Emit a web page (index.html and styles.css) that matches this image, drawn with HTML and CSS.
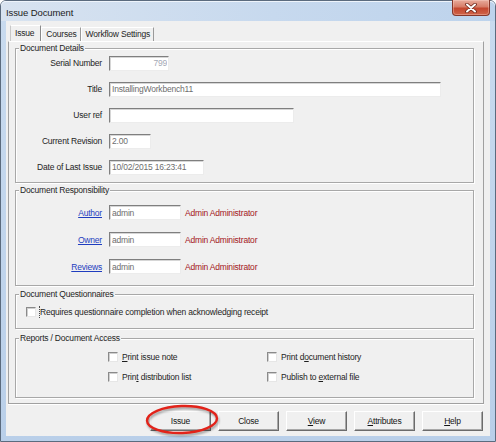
FILE: index.html
```html
<!DOCTYPE html>
<html lang="en">
<head>
<meta charset="utf-8">
<title>Issue Document</title>
<link rel="stylesheet" href="styles.css">
</head>
<body>
<div class="window">
  <div class="titlebar">
    <span class="title">Issue Document</span>
    <button class="close-btn" aria-label="Close">
      <svg width="12" height="10" viewBox="0 0 12 10">
        <path d="M2 1.5 L10 8.5 M10 1.5 L2 8.5" stroke="#6a2418" stroke-width="3.6" stroke-linecap="round"/>
        <path d="M2 1.5 L10 8.5 M10 1.5 L2 8.5" stroke="#ffffff" stroke-width="2" stroke-linecap="round"/>
      </svg>
    </button>
  </div>

  <div class="client">
    <div class="tabs">
      <div class="tab active">Issue</div>
      <div class="tab">Courses</div>
      <div class="tab">Workflow Settings</div>
    </div>

    <div class="panel">
      <div class="group details">
        <span class="group-title">Document Details</span>
        <div class="form-grid">
          <label>Serial Number</label>
          <input class="field w-serial num" type="text" value="799" readonly>
          <label>Title</label>
          <input class="field w-title" type="text" value="InstallingWorkbench11" readonly>
          <label>User ref</label>
          <input class="field w-ref" type="text" value="">
          <label>Current Revision</label>
          <input class="field w-rev" type="text" value="2.00" readonly>
          <label>Date of Last Issue</label>
          <input class="field w-date" type="text" value="10/02/2015 16:23:41" readonly>
        </div>
      </div>

      <div class="group responsibility">
        <span class="group-title">Document Responsibility</span>
        <div class="form-grid people">
          <a class="link" href="#">Author</a>
          <div class="person">
            <input class="field w-user" type="text" value="admin" readonly>
            <span class="fullname">Admin Administrator</span>
          </div>
          <a class="link" href="#">Owner</a>
          <div class="person">
            <input class="field w-user" type="text" value="admin" readonly>
            <span class="fullname">Admin Administrator</span>
          </div>
          <a class="link" href="#">Reviews</a>
          <div class="person">
            <input class="field w-user" type="text" value="admin" readonly>
            <span class="fullname">Admin Administrator</span>
          </div>
        </div>
      </div>

      <div class="group questionnaires">
        <span class="group-title">Document Questionnaires</span>
        <div class="option">
          <span class="check"></span>
          <span class="focus">Requires questionnaire completion when acknowledging receipt</span>
        </div>
      </div>

      <div class="group access">
        <span class="group-title">Reports / Document Access</span>
        <div class="options-grid">
          <div class="option"><span class="check"></span><span><u>P</u>rint issue note</span></div>
          <div class="option"><span class="check"></span><span>Print d<u>o</u>cument history</span></div>
          <div class="option"><span class="check"></span><span>Prin<u>t</u> distribution list</span></div>
          <div class="option"><span class="check"></span><span>Publish to <u>e</u>xternal file</span></div>
        </div>
      </div>
    </div>

    <div class="buttons">
      <button class="btn">Issue</button>
      <button class="btn">Close</button>
      <button class="btn"><u>V</u>iew</button>
      <button class="btn"><u>A</u>ttributes</button>
      <button class="btn"><u>H</u>elp</button>
      <svg class="callout" width="76" height="34" viewBox="0 0 76 34">
        <ellipse cx="38" cy="17.5" rx="35" ry="13.5" transform="rotate(-2 38 17.5)" fill="none" stroke="#e2231a" stroke-width="2.4"/>
      </svg>
    </div>
  </div>
</div>
</body>
</html>
```

FILE: styles.css
```css
* {
  box-sizing: border-box;
}

html,
body {
  margin: 0;
  padding: 0;
}

body {
  width: 496px;
  height: 442px;
  background: #ffffff;
  font-family: "Liberation Sans", Arial, sans-serif;
  font-size: 8.5px;
  letter-spacing: -0.2px;
  line-height: 10px;
  color: #1e1e1e;
}

/* Window frame (Windows 7 basic look) */
.window {
  width: 496px;
  height: 442px;
  display: flex;
  flex-direction: column;
  padding: 0 5px 5px;
  border: 1px solid #5b6b7e;
  border-radius: 6px 6px 0 0;
  background: linear-gradient(to bottom, #c9dbef, #b9cfe9);
}

.titlebar {
  height: 20px;
  flex: none;
  display: flex;
  align-items: flex-start;
  background: linear-gradient(to right, #d8e3f0 0%, #c7d9ee 55%, #bdd3ec 100%);
  margin: 0 -5px;
  padding: 0 5px;
  border-radius: 5px 5px 0 0;
  box-shadow: inset 0 1px 0 #eef4fb;
}

.title {
  font-size: 9.5px;
  letter-spacing: -0.1px;
  line-height: 10px;
  margin-top: 7px;
  color: #1c1c1c;
}

.close-btn {
  margin-left: auto;
  width: 38px;
  height: 16px;
  margin-top: -1px;
  padding: 0;
  display: flex;
  align-items: center;
  justify-content: center;
  border: 1px solid #86372a;
  border-top: none;
  border-radius: 0 0 4px 4px;
  background: linear-gradient(to bottom, #e8ab9c 0%, #d77d68 45%, #c4472f 55%, #cf6449 100%);
  box-shadow: inset 0 0 0 1px rgba(255, 220, 210, 0.35);
}

.close-btn svg {
  display: block;
}

/* Client area */
.client {
  flex: 1;
  display: flex;
  flex-direction: column;
  background: #f0f0f0;
}

.tabs {
  height: 20px;
  flex: none;
  display: flex;
  align-items: flex-end;
  padding-left: 4px;
}

.tab {
  height: 14px;
  padding: 0 3px 0 4px;
  line-height: 12px;
  border-top: 1px solid #ffffff;
  border-left: 1px solid #ffffff;
  border-right: 1px solid #9a9a9a;
  white-space: nowrap;
}

.tab.active {
  height: 16px;
  padding-right: 6px;
  line-height: 14px;
  border-left-color: #c8c8c8;
  border-right-color: #8a8a8a;
}

.panel {
  flex: none;
  display: flex;
  flex-direction: column;
  margin: 0 6px 0 2px;
  padding: 6px 9px 5px 6px;
  border: 1px solid #a0a0a0;
  border-top-color: #ffffff;
  box-shadow: 0 1px 0 #ffffff;
}

/* Group boxes */
.group {
  position: relative;
  border: 1px solid #a8a8a8;
  box-shadow: inset 1px 1px 0 #ffffff, 1px 1px 0 #ffffff;
}

.group-title {
  position: absolute;
  top: -6px;
  left: 3px;
  padding: 0 1px;
  background: #f0f0f0;
  line-height: 10px;
  white-space: nowrap;
}

.details {
  padding: 1px 0 2px;
}

.responsibility {
  margin-top: 7px;
  padding: 8px 0 5px;
}

.questionnaires {
  margin-top: 8px;
  padding: 10px 0 9px 10px;
}

.access {
  margin-top: 9px;
  padding: 11px 0 13px 92px;
}

.form-grid {
  display: grid;
  grid-template-columns: 86px auto;
  grid-auto-rows: 26px;
  column-gap: 7px;
  align-items: center;
  justify-items: start;
}

.form-grid > label,
.form-grid > .link {
  justify-self: end;
}

.people {
  grid-auto-rows: 27px;
}

.link {
  color: #1f3dbf;
  text-decoration: underline;
}

.person {
  display: flex;
  align-items: center;
  gap: 4px;
}

.fullname {
  color: #a3161a;
}

/* Sunken edit fields */
.field {
  height: 15px;
  margin: 0;
  padding: 0 1px 0 2px;
  font: inherit;
  letter-spacing: inherit;
  color: #6e6e6e;
  background: #ffffff;
  border: 1px solid;
  border-color: #7f7f7f #ececec #ececec #7f7f7f;
  box-shadow: inset 1px 1px 0 #d6d6d6;
  outline: none;
}

.field.num {
  text-align: right;
  color: #a4a9b6;
}

.w-serial { width: 60px; }
.w-title { width: 332px; }
.w-ref { width: 185px; }
.w-rev { width: 42px; }
.w-date { width: 95px; }
.w-user { width: 72px; }

/* Check boxes */
.option {
  height: 14px;
  display: flex;
  align-items: center;
  white-space: nowrap;
}

.check {
  width: 10px;
  height: 10px;
  flex: none;
  margin-right: 4px;
  background: #ffffff;
  border: 1px solid;
  border-color: #8a8a8a #e6e6e6 #e6e6e6 #8a8a8a;
  box-shadow: inset 1px 1px 0 #cfcfcf;
}

.questionnaires .check {
  margin-right: 3px;
}

.focus {
  border-left: 1px dotted #4a4a4a;
  line-height: 12px;
}

.options-grid {
  display: grid;
  grid-template-columns: 159px auto;
  grid-auto-rows: 14px;
  row-gap: 6px;
}

/* Command buttons */
.buttons {
  position: relative;
  flex: none;
  display: flex;
  justify-content: flex-end;
  gap: 7px;
  margin-top: 7px;
  padding-right: 7px;
}

.btn {
  width: 61px;
  height: 20px;
  padding: 0;
  font: inherit;
  letter-spacing: inherit;
  color: #141414;
  background: #f0f0f0;
  border: 1px solid;
  border-color: #ffffff #6b6b6b #6b6b6b #ffffff;
  box-shadow: inset -1px -1px 0 #a8a8a8;
}

.callout {
  position: absolute;
  left: 138px;
  top: -9px;
  filter: drop-shadow(1px 2px 1px rgba(0, 0, 0, 0.35));
  pointer-events: none;
}
```
